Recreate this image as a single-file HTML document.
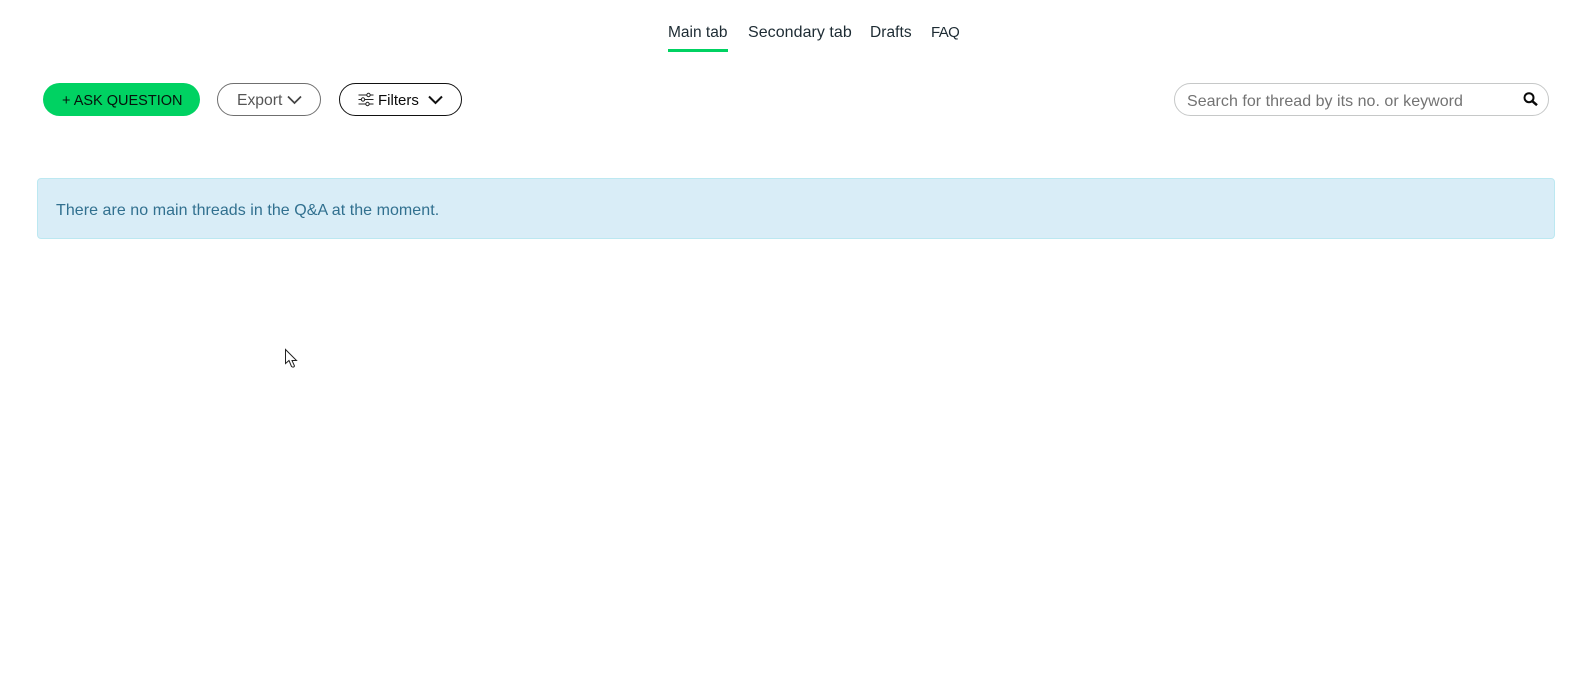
<!DOCTYPE html>
<html><head><meta charset="utf-8"><style>
html,body{margin:0;padding:0;background:#fff;width:1590px;height:680px;overflow:hidden;font-family:"Liberation Sans",sans-serif}
.a{position:absolute;white-space:nowrap;box-sizing:border-box}
.tab{top:22.5px;font-size:16px;line-height:20px;color:#1d2b33}
.btn{top:83px;height:33px;border-radius:17px;background:#fff}
svg{position:absolute;overflow:visible}
</style></head><body>
<div class="a tab" style="left:668px;font-size:15.5px">Main tab</div>
<div class="a" style="left:668px;top:49px;width:60px;height:3px;background:#00d262"></div>
<div class="a tab" style="left:748px;letter-spacing:.05px">Secondary tab</div>
<div class="a tab" style="left:870px;font-size:15.5px;letter-spacing:.05px">Drafts</div>
<div class="a tab" style="left:931px;font-size:15px;letter-spacing:-.6px">FAQ</div>

<div class="a btn" style="left:43px;width:157px;background:#00d262"></div>
<div class="a" style="left:62px;top:91px;font-size:14.5px;line-height:20px;color:#06130c">+ ASK QUESTION</div>

<div class="a btn" style="left:217px;width:104px;border:1px solid #6f6f6f"></div>
<div class="a" style="left:237px;top:90.5px;font-size:15.7px;line-height:20px;color:#555">Export</div>
<svg style="left:287px;top:95px" width="15" height="10" viewBox="0 0 15 10"><path d="M1 1.5L7.5 8L14 1.5" fill="none" stroke="#444" stroke-width="1.7"/></svg>

<div class="a btn" style="left:339px;width:123px;border:1px solid #111"></div>
<svg style="left:358px;top:93px" width="16" height="13" viewBox="0 0 16 13" fill="none" stroke="#222" stroke-width="1"><path d="M0.5 2H8.5M12.5 2H15.5M0.5 6.5H3M7 6.5H15.5M0.5 11H7.5M11.5 11H15.5"/><circle cx="10.5" cy="2" r="1.7"/><circle cx="5" cy="6.5" r="1.7"/><circle cx="9.5" cy="11" r="1.7"/></svg>
<div class="a" style="left:378px;top:90.5px;font-size:15px;line-height:20px;color:#0a0a0a">Filters</div>
<svg style="left:428px;top:95px" width="15" height="10" viewBox="0 0 15 10"><path d="M1 1.5L7.5 8L14 1.5" fill="none" stroke="#111" stroke-width="2"/></svg>

<div class="a btn" style="left:1174px;width:375px;border:1px solid #c6c8c8"></div>
<div class="a" style="left:1187px;top:91.5px;font-size:16px;line-height:20px;color:#737373;letter-spacing:.03px">Search for thread by its no. or keyword</div>
<svg style="left:1523px;top:92px" width="15" height="14" viewBox="0 0 15 14" fill="none" stroke="#0a0a0a" stroke-width="2"><circle cx="6" cy="5.7" r="4.5"/><path d="M9.5 9.3L14 13.2" stroke-width="2.5"/></svg>

<div class="a" style="left:37px;top:178px;width:1518px;height:61px;background:#d9edf7;border:1px solid #bce8f1;border-radius:4px"></div>
<div class="a" style="left:56px;top:200.5px;font-size:16px;line-height:20px;color:#31708f;letter-spacing:.05px">There are no main threads in the Q&amp;A at the moment.</div>

<svg style="left:285px;top:349px" width="13" height="20" viewBox="0 0 13 20"><path d="M0.5 0.5V14.5L4 11.5L6.5 17.5Q8.5 19 9.5 17L7 11.5H11.5Z" fill="#fff" stroke="#222" stroke-width="1"/></svg>
</body></html>
